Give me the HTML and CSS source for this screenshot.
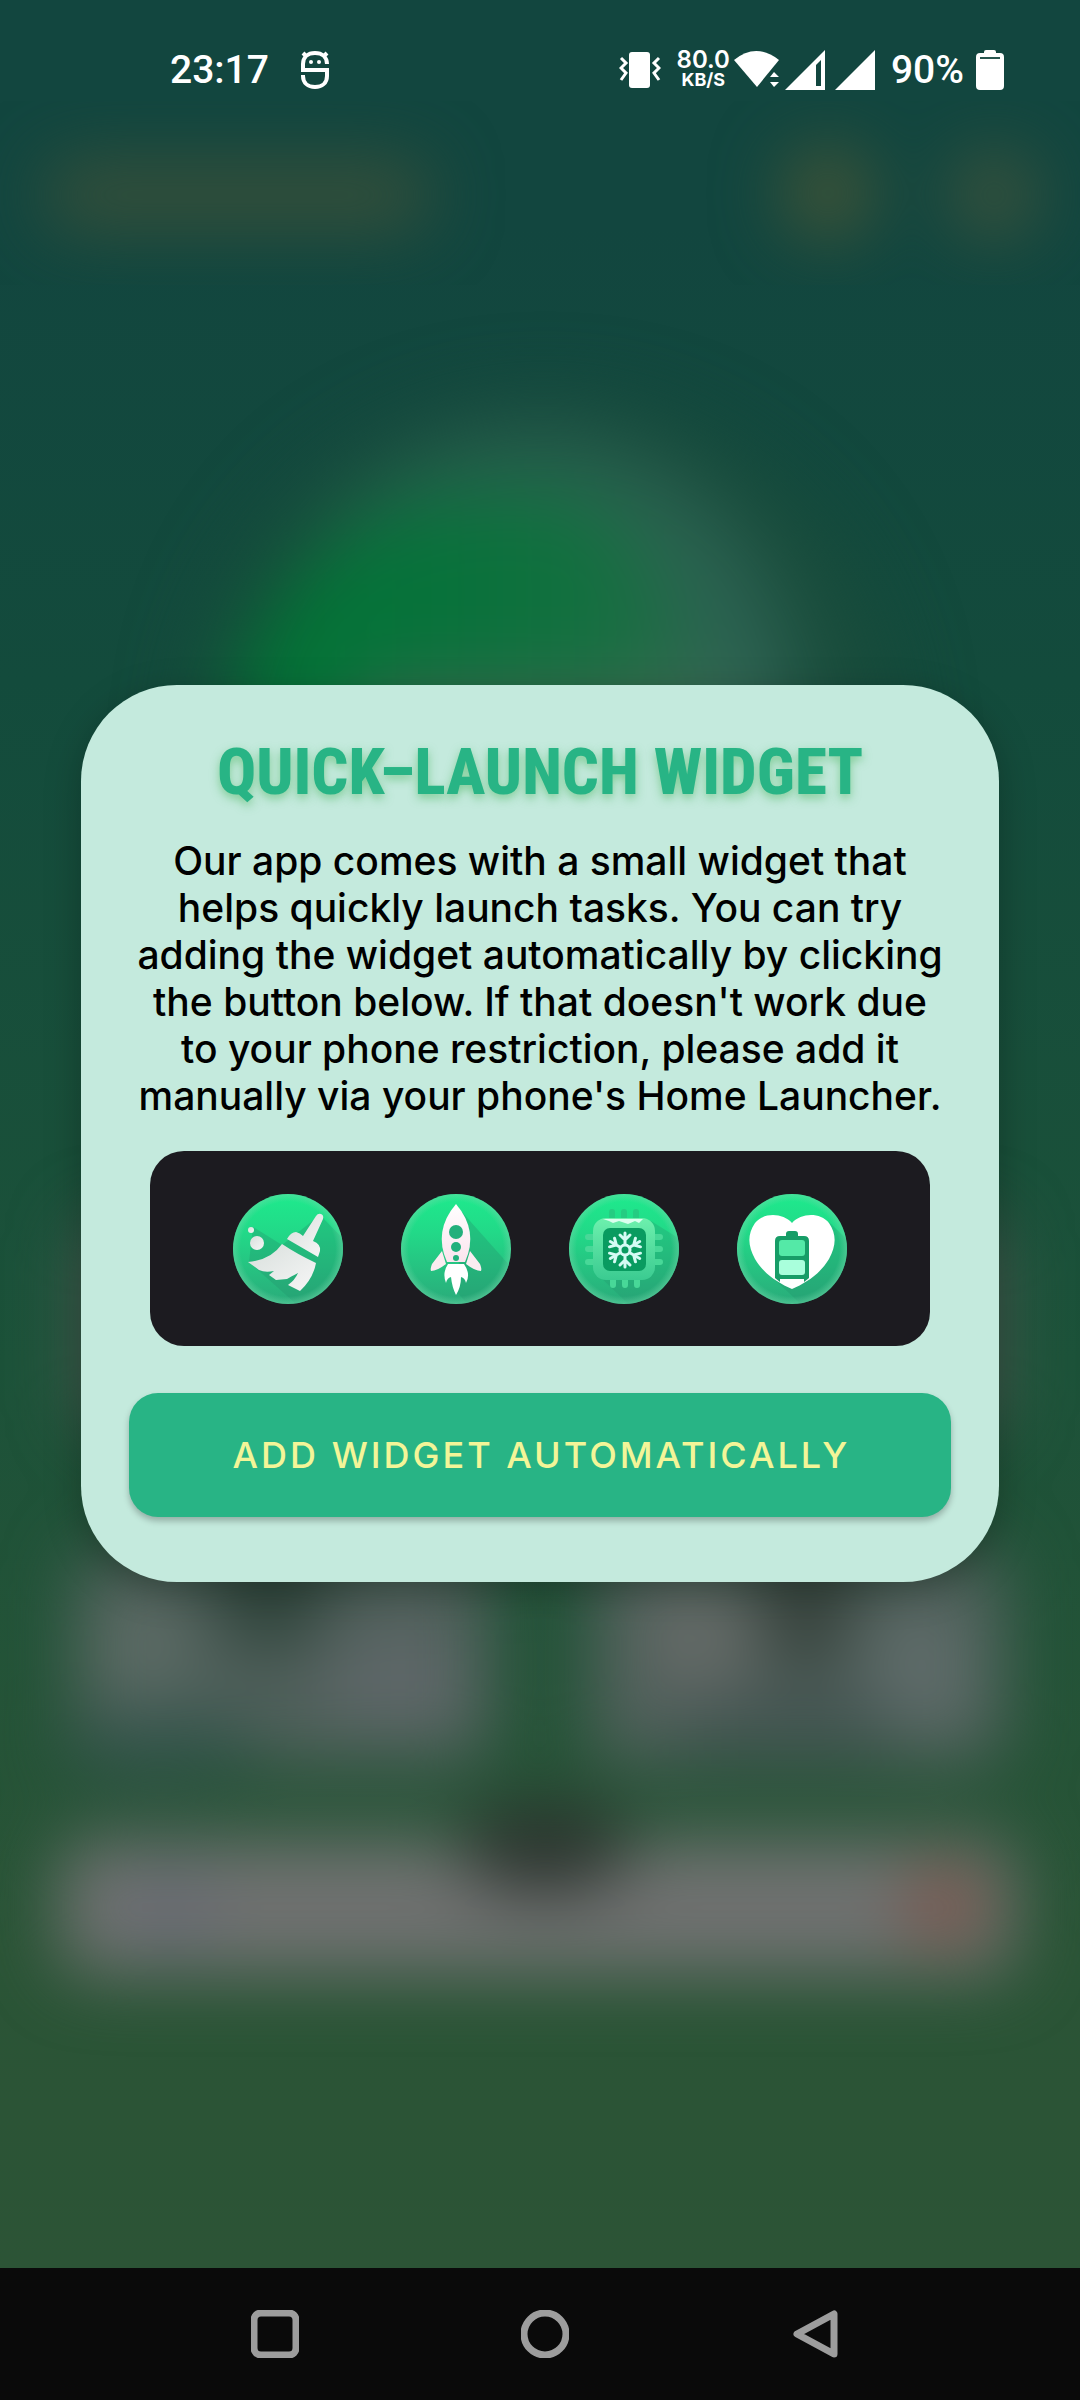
FILE: index.html
```html
<!DOCTYPE html>
<html lang="en">
<head>
<meta charset="utf-8">
<meta name="viewport" content="width=device-width, initial-scale=1">
<title>Quick-launch widget</title>
<link rel="stylesheet" href="styles.css">
</head>
<body>
<div class="screen">
  <div class="backdrop" aria-hidden="true">
    <svg class="scene" viewBox="0 0 1080 2268" preserveAspectRatio="none">
      <defs>
        <filter id="soft" x="-50%" y="-50%" width="200%" height="200%" color-interpolation-filters="sRGB"><feGaussianBlur stdDeviation="34"/></filter>
        <filter id="softer" x="-50%" y="-50%" width="200%" height="200%" color-interpolation-filters="sRGB"><feGaussianBlur stdDeviation="40"/></filter>
        <linearGradient id="dial" x1="0" y1="0" x2="1" y2="0"><stop offset="0" stop-color="#007634"/><stop offset=".4" stop-color="#06723a"/><stop offset=".75" stop-color="#12703f"/><stop offset="1" stop-color="#256a48"/></linearGradient>
      </defs>
      <g filter="url(#soft)">
        <rect x="45" y="160" width="385" height="70" rx="30" fill="#364f3a"/>
        <circle cx="828" cy="193" r="46" fill="#425437"/>
        <circle cx="994" cy="195" r="44" fill="#3b523c"/>
      </g>
      <g filter="url(#softer)">
        <circle cx="545" cy="750" r="345" fill="#1a4c3b"/>
        <circle cx="528" cy="700" r="264" fill="#2c6252"/>
        <path d="M490 492A255 260 0 0 0 230 740H690C710 600 640 472 490 492Z" fill="url(#dial)"/>
        <rect x="360" y="690" width="380" height="80" fill="#416b53"/>
      </g>
      <g filter="url(#soft)">
        <rect x="80" y="1220" width="920" height="210" rx="30" fill="#4c5b52"/>
        <rect x="75" y="1550" width="415" height="215" rx="30" fill="#50605b"/>
        <rect x="590" y="1550" width="415" height="215" rx="30" fill="#50605b"/>
        <rect x="330" y="1640" width="140" height="80" fill="#60686a"/>
        <circle cx="140" cy="1650" r="50" fill="#5d6c66"/>
        <circle cx="700" cy="1640" r="60" fill="#646a67"/>
        <circle cx="920" cy="1670" r="60" fill="#5f6c6a"/>
        <ellipse cx="270" cy="1590" rx="60" ry="60" fill="#2f443b"/>
        <ellipse cx="805" cy="1600" rx="48" ry="70" fill="#36423c"/>
        <ellipse cx="160" cy="1745" rx="100" ry="35" fill="#34544b"/>
        <rect x="680" y="1700" width="210" height="50" fill="#415250"/>
        <rect x="60" y="1840" width="955" height="135" rx="30" fill="#6f7170"/>
        <ellipse cx="545" cy="1848" rx="85" ry="45" fill="#2c352f"/>
        <circle cx="945" cy="1905" r="40" fill="#7b564b"/>
        <circle cx="170" cy="1908" r="46" fill="#686b73"/>
      </g>
    </svg>
  </div>

  <header class="status">
    <div class="status-left">
      <span class="clock">23:17</span>
      <svg class="buddy" viewBox="0 0 30 40" fill="none" stroke="#fff" stroke-width="4">
        <path d="M27 14C27 7 22 3 15 3S3 7 3 14V20H27V26C27 33 22 37 15 37S3 33 3 26V25M3 3L7 7M27 3L23 7"/>
        <circle cx="11" cy="12" r="2" fill="#fff" stroke="none"/><circle cx="19" cy="12" r="2" fill="#fff" stroke="none"/>
      </svg>
    </div>
    <div class="status-right">
      <svg class="vibrate" viewBox="0 0 42 40"><rect x="10" y="2" width="21" height="36" rx="3" fill="#fff"/><path d="M2 8L7 13L2 18L7 23L2 30M40 8L35 13L40 18L35 23L40 30" fill="none" stroke="#fff" stroke-width="3"/></svg>
      <span class="speed"><b>80.0</b><small>KB/S</small></span>
      <svg class="wifi" viewBox="0 0 46 40"><path d="M0 10Q22 -8 45 10L23 37Z" fill="#fff"/><path d="M34 27L38 20H48V40H34Z" fill="#12463f"/><path d="M36 27L40 22L45 27ZM36 32H45L40 37Z" fill="#fff"/></svg>
      <svg class="signal" viewBox="0 0 42 42"><path d="M1 41L41 1V41Z" fill="#fff"/><path d="M32 16L37 11V37H32Z" fill="#12463f"/></svg>
      <svg class="signal signal-two" viewBox="0 0 42 42"><path d="M1 41L41 1V41Z" fill="#fff"/></svg>
      <span class="percent">90%</span>
      <svg class="battery" viewBox="0 0 28 42"><path d="M8 4V3Q8 1 10 1H18Q20 1 20 3V4H24Q28 4 28 8V37Q28 41 24 41H4Q0 41 0 37V8Q0 4 4 4Z" fill="#fff"/><path d="M4 9H24" stroke="#28564f" stroke-width="2"/></svg>
    </div>
  </header>

  <main class="stage">
    <section class="dialog" role="dialog" aria-labelledby="title">
      <h1 class="title" id="title">QUICK–LAUNCH WIDGET</h1>
      <p class="copy">Our app comes with a small widget that<br>helps quickly launch tasks. You can try<br>adding the widget automatically by clicking<br>the button below. If that doesn't work due<br>to your phone restriction, please add it<br>manually via your phone's Home Launcher.</p>
      <div class="widget">
        <svg class="tool" viewBox="0 0 110 110" role="img" aria-label="Clean">
          <defs>
            <linearGradient id="disc" x1="0" y1="0" x2="0" y2="1"><stop offset="0" stop-color="#1eea8d"/><stop offset=".35" stop-color="#22d988"/><stop offset="1" stop-color="#2aab7a"/></linearGradient>
            <radialGradient id="rim"><stop offset=".86" stop-color="#6fd8a8" stop-opacity="0"/><stop offset="1" stop-color="#6fd8a8" stop-opacity=".5"/></radialGradient>
            <clipPath id="round"><circle cx="55" cy="55" r="55"/></clipPath>
            <linearGradient id="paper" x1="0" y1="0" x2="1" y2="1"><stop offset="0" stop-color="#d8dfdc"/><stop offset="1" stop-color="#f6f6f6"/></linearGradient>
            <linearGradient id="hull" x1="0" y1="0" x2="0" y2="1"><stop offset="0" stop-color="#fff"/><stop offset="1" stop-color="#fbe4ee"/></linearGradient>
            <linearGradient id="chip" x1="0" y1="0" x2="0" y2="1"><stop offset="0" stop-color="#6df0ad"/><stop offset="1" stop-color="#3bcb91"/></linearGradient>
          </defs>
          <circle cx="55" cy="55" r="55" fill="url(#disc)"/>
          <path d="M20 33L49 51L87 21L125 60L80 125L16 68Z" fill="#23956c" opacity=".35" clip-path="url(#round)"/>
          <circle cx="55" cy="55" r="55" fill="url(#rim)"/>
          <g fill="url(#paper)"><circle cx="18" cy="36" r="3"/><circle cx="24" cy="49" r="7"/>
          <path d="M83 22Q85 19 88 20Q91 21 90 25L80 47Q88 50 87 57L85 63L54 45Q58 38 63 38Q67 39 70 42Z"/>
          <path d="M49 50Q64 60 83 69Q80 85 67 97L55 91Q62 86 65 79Q57 83 54 85L43 86L36 81L41 77Q32 79 26 76L15 68Q38 66 49 50Z"/></g>
        </svg>
        <svg class="tool" viewBox="0 0 110 110" role="img" aria-label="Boost">
          <circle cx="55" cy="55" r="55" fill="url(#disc)"/>
          <path d="M61 18L125 90L80 125L56 98Z" fill="#23956c" opacity=".35" clip-path="url(#round)"/>
          <circle cx="55" cy="55" r="55" fill="url(#rim)"/>
          <path d="M55 10Q78 37 64 68H46Q32 37 55 10Z" fill="url(#hull)"/>
          <path d="M41 57L45 70Q36 77 30 77Q29 75 31 70ZM69 57L65 70Q74 77 80 77Q81 75 79 70Z" fill="#fbecf1"/>
          <g fill="#23b07c"><circle cx="55" cy="38" r="7"/><circle cx="55" cy="53" r="5"/><circle cx="55" cy="64" r="3"/></g>
          <path d="M47 70H63Q70 80 65 89Q64 84 60 83Q60 93 55 101Q51 93 50 83Q46 84 45 89Q41 79 47 70Z" fill="#fff"/>
        </svg>
        <svg class="tool" viewBox="0 0 110 110" role="img" aria-label="Cool CPU">
          <circle cx="55" cy="55" r="55" fill="url(#disc)"/>
          <path d="M82 27L125 54L75 125L28 80Z" fill="#23956c" opacity=".3" clip-path="url(#round)"/>
          <circle cx="55" cy="55" r="55" fill="url(#rim)"/>
          <path d="M43 18V26M55 18V26M67 18V26" stroke="#25cc82" stroke-width="6" stroke-linecap="round"/>
          <path d="M19 43H91M19 55H91M19 68H91M44 80V91M56 80V91M68 80V91" stroke="#48d898" stroke-width="6" stroke-linecap="round"/>
          <rect x="24" y="24" width="62" height="62" rx="13" fill="url(#chip)"/>
          <path d="M34 25H74L70 29L66 27L59 30L50 27L44 29L40 27Z" fill="#dcfff0"/>
          <rect x="34" y="34" width="43" height="43" rx="7" fill="#099b60"/>
          <g stroke="#d5fbf4" stroke-width="3" stroke-linecap="round" fill="none" transform="translate(56 56)">
            <circle r="5"/>
            <path id="arm" d="M0 -6V-17M-5 -15L0 -10L5 -15"/>
            <use href="#arm" transform="rotate(60)"/><use href="#arm" transform="rotate(120)"/><use href="#arm" transform="rotate(180)"/><use href="#arm" transform="rotate(240)"/><use href="#arm" transform="rotate(300)"/>
          </g>
        </svg>
        <svg class="tool" viewBox="0 0 110 110" role="img" aria-label="Battery health">
          <circle cx="55" cy="55" r="55" fill="url(#disc)"/>
          <path d="M92 28L125 60L80 125L22 71Z" fill="#23956c" opacity=".35" clip-path="url(#round)"/>
          <circle cx="55" cy="55" r="55" fill="url(#rim)"/>
          <path d="M55 29C64 19 83 18 92 29C100 41 99 52 92 65C83 80 69 89 55 95C41 89 27 80 18 65C11 52 10 41 18 29C27 18 46 19 55 29Z" fill="#fff"/>
          <path d="M38 84V47Q38 42 43 42H49V40Q49 37 52 37H58Q61 37 61 40V42H67Q72 42 72 47V84L67 88V85H43V88Z" fill="#179d67"/>
          <rect x="42" y="46" width="26" height="16" rx="3" fill="#54e9a7"/><rect x="42" y="66" width="26" height="15" rx="3" fill="#a9ffdc"/>
        </svg>
      </div>
      <button class="add" type="button">ADD WIDGET AUTOMATICALLY</button>
    </section>
  </main>

  <nav class="navbar" aria-label="System">
    <button class="key" type="button" aria-label="Recent apps"><svg viewBox="0 0 48 48"><rect x="3" y="3" width="42" height="42" rx="7"/></svg></button>
    <button class="key" type="button" aria-label="Home"><svg viewBox="0 0 48 48"><circle cx="24" cy="24" r="21"/></svg></button>
    <button class="key" type="button" aria-label="Back"><svg viewBox="0 0 48 48"><path d="M43 4V44L6 24Z"/></svg></button>
  </nav>
</div>
</body>
</html>
```
FILE: styles.css
```css
* { box-sizing: border-box; }

body {
  margin: 0;
  font-family: Inter, "Liberation Sans", sans-serif;
}

.screen {
  position: relative;
  min-height: 100vh;
  display: flex;
  flex-direction: column;
  isolation: isolate;
}

.backdrop {
  position: absolute;
  inset: 0 0 132px;
  z-index: -1;
  overflow: hidden;
  background: linear-gradient(#12463f 0%, #12463f 10%, #134b3c 30%, #1c5239 60%, #2a5436 86%, #2c5436 100%);
}

.scene {
  display: block;
  width: 100%;
  height: 100%;
}

.status {
  display: flex;
  justify-content: space-between;
  align-items: center;
  height: 140px;
  padding: 0 76px 0 170px;
  color: #fff;
  font-family: Roboto, sans-serif;
  font-size: 39px;
  font-weight: 500;
}

.status-left,
.status-right {
  display: flex;
  align-items: center;
}

.status-left { gap: 31px; }

.buddy { width: 30px; height: 40px; }
.vibrate { width: 42px; height: 40px; margin-right: 16px; }
.wifi { width: 46px; height: 40px; margin: 0 4px; }
.signal { width: 42px; height: 42px; }
.signal-two { margin: 0 15px 0 8px; }
.battery { width: 28px; height: 42px; margin-left: 12px; }

.speed {
  display: flex;
  flex-direction: column;
  align-items: center;
  font-family: Inter, sans-serif;
  line-height: 20px;
}

.speed b { font-size: 24px; font-weight: 600; }
.speed small { font-size: 18px; font-weight: 700; }

.stage {
  flex: 1;
  display: flex;
  align-items: center;
  padding: 0 81px 141px;
}

.dialog {
  width: 100%;
  padding: 50px 48px 65px;
  border-radius: 96px;
  background: #c4eadd;
  box-shadow: 0 10px 36px rgba(0, 0, 0, .25);
  text-align: center;
}

.title {
  margin: 0;
  color: #28b485;
  font-family: "Roboto Condensed", Roboto, sans-serif;
  font-size: 65px;
  font-weight: 800;
  line-height: 74px;
  text-shadow: 0 4px 10px rgba(60, 175, 80, .5);
}

.copy {
  margin: 28px -20px 0;
  color: #000;
  font-size: 39px;
  font-weight: 500;
  line-height: 47px;
}

.widget {
  display: flex;
  justify-content: center;
  align-items: center;
  gap: 58px;
  height: 195px;
  margin: 32px 21px 0;
  border-radius: 34px;
  background: #1c1b20;
}

.tool { width: 110px; height: 110px; }

.add {
  display: block;
  width: 100%;
  height: 124px;
  margin-top: 47px;
  padding: 0 0 0 3px;
  border: 0;
  border-radius: 29px;
  background: #28b485;
  box-shadow: 0 4px 6px rgba(0, 0, 0, .25);
  color: #f3f598;
  font: 500 36px Inter, sans-serif;
  letter-spacing: 3px;
}

.navbar {
  display: grid;
  grid-template-columns: repeat(3, 48px);
  justify-content: center;
  align-items: center;
  column-gap: 222px;
  height: 132px;
  padding-left: 10px;
  background: #0a0a0a;
}

.key {
  width: 48px;
  height: 48px;
  padding: 0;
  border: 0;
  background: none;
}

.key svg {
  display: block;
  fill: none;
  stroke: #9d9d9d;
  stroke-width: 7;
  stroke-linejoin: round;
}
```
